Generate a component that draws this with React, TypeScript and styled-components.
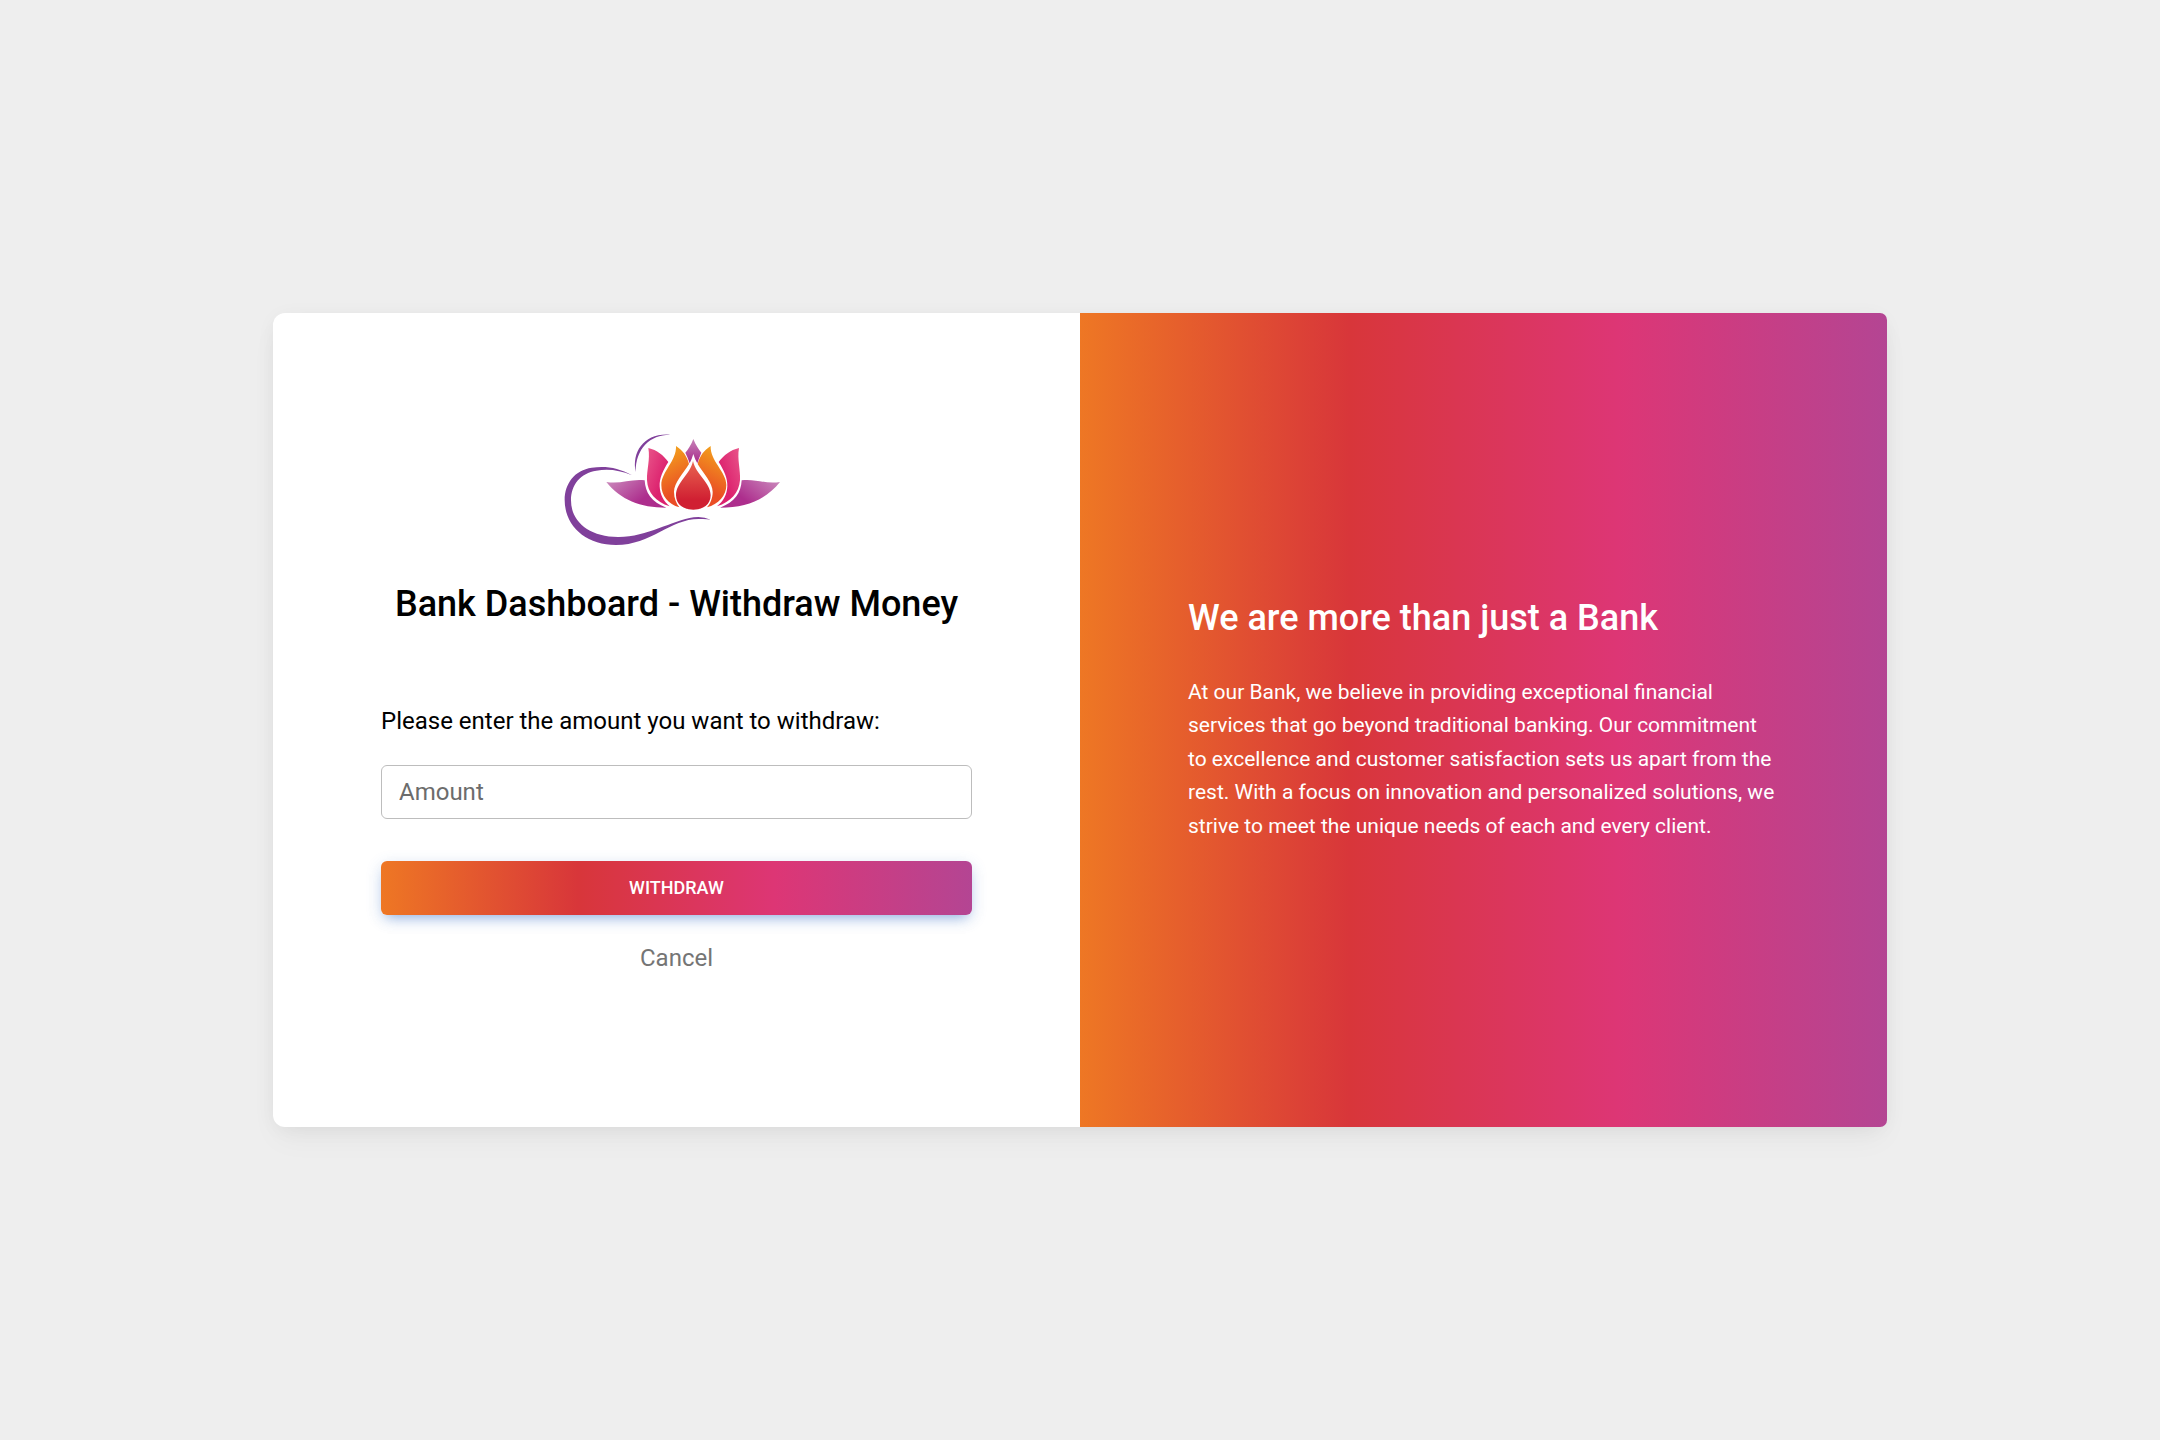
import React from "react";
import styled, { createGlobalStyle } from "styled-components";

const brandGradient = "linear-gradient(to right, #ee7724, #d8363a, #dd3675, #b44593)";

const GlobalStyle = createGlobalStyle`
  *, *::before, *::after { box-sizing: border-box; }
  body {
    margin: 0;
    background: #eee;
    color: #000;
    font-family: Roboto, "Liberation Sans", sans-serif;
    font-size: 24px;
    line-height: 1.6;
  }
`;

const Page = styled.main`
  min-height: 100vh;
  display: flex;
  align-items: center;
  justify-content: center;
`;

const Card = styled.section`
  width: 1614px;
  height: 814px;
  display: grid;
  grid-template-columns: 1fr 1fr;
  background: #fff;
  border-radius: 12px;
  box-shadow: 0 3px 22.5px -4.5px rgba(0, 0, 0, 0.07), 0 15px 30px -3px rgba(0, 0, 0, 0.04);
`;

const FormPanel = styled.div`
  display: flex;
  flex-direction: column;
  padding: 107px 108px 0;
`;

const Brand = styled.div`
  display: flex;
  flex-direction: column;
  align-items: center;
  gap: 22px;
  margin-bottom: 76px;
`;

const Logo = styled.svg`
  display: block;
  width: 254px;
  height: 140px;
`;

const Title = styled.h4`
  margin: 0;
  padding-top: 1px;
  font-size: 36px;
  font-weight: 500;
  line-height: 1.2;
`;

const Form = styled.form`
  display: flex;
  flex-direction: column;
`;

const Label = styled.label`
  margin-bottom: 24px;
`;

const AmountInput = styled.input`
  height: 54px;
  margin-bottom: 42px;
  padding: 0 17px;
  border: 1px solid #bdbdbd;
  border-radius: 6px;
  outline: 0;
  background: #fff;
  color: #4f4f4f;
  font: inherit;
  line-height: 1.6;
  &::placeholder { color: #6c6c6c; opacity: 1; }
`;

const SubmitButton = styled.button`
  height: 54px;
  margin-bottom: 24px;
  padding: 0;
  border: 0;
  border-radius: 6px;
  background: ${brandGradient};
  box-shadow: 0 7px 12px -6px rgba(59, 113, 202, 0.5), 0 4px 16px 0 rgba(59, 113, 202, 0.2);
  color: #fff;
  font: 500 18px/1.5 Roboto, "Liberation Sans", sans-serif;
  text-transform: uppercase;
`;

const CancelLink = styled.a`
  align-self: center;
  color: #757575;
  text-decoration: none;
`;

const AboutPanel = styled.div`
  display: flex;
  flex-direction: column;
  justify-content: center;
  gap: 35px;
  padding: 0 108px;
  border-radius: 0 7px 7px 0;
  background: ${brandGradient};
  color: #fff;
`;

const AboutText = styled.p`
  margin: 0;
  font-size: 21px;
`;

function LotusLogo() {
  return (
    <Logo viewBox="0 0 762 420" role="img" aria-label="Lotus">
      <defs>
        <linearGradient id="leafLeft" x1="0" y1="0" x2="1" y2="0.6">
          <stop offset="0" stopColor="#cb8bbd" />
          <stop offset="0.75" stopColor="#ad2e8d" />
        </linearGradient>
        <linearGradient id="leafRight" x1="1" y1="0" x2="0" y2="0.6">
          <stop offset="0" stopColor="#cb8bbd" />
          <stop offset="0.75" stopColor="#ad2e8d" />
        </linearGradient>
        <linearGradient id="pinkLeft" x1="0" y1="0" x2="0.65" y2="0.6">
          <stop offset="0" stopColor="#e9568a" />
          <stop offset="1" stopColor="#dc216e" />
        </linearGradient>
        <linearGradient id="pinkRight" x1="1" y1="0" x2="0.35" y2="0.6">
          <stop offset="0" stopColor="#e9568a" />
          <stop offset="1" stopColor="#dc216e" />
        </linearGradient>
        <linearGradient id="orangeLeft" x1="0.4" y1="0" x2="0.65" y2="1">
          <stop offset="0" stopColor="#f3a31c" />
          <stop offset="0.75" stopColor="#ea4d25" />
        </linearGradient>
        <linearGradient id="orangeRight" x1="0.6" y1="0" x2="0.35" y2="1">
          <stop offset="0" stopColor="#f3a31c" />
          <stop offset="0.75" stopColor="#ea4d25" />
        </linearGradient>
        <linearGradient id="tip" x1="0" y1="0" x2="0" y2="1">
          <stop offset="0" stopColor="#c783b8" />
          <stop offset="1" stopColor="#a7298a" />
        </linearGradient>
        <linearGradient id="core" x1="0" y1="0" x2="0" y2="1">
          <stop offset="0" stopColor="#e96550" />
          <stop offset="0.8" stopColor="#d01f32" />
        </linearGradient>
      </defs>
      <path fill="#80409b" d="M257 156C245 94 283 38 361 44C302 43 257 84 257 156Z" />
      <path
        fill="#80409b"
        d="M246 166C205 143 168 137 125 143C75 150 44 190 44 240C44 318 107 375 198 375C306 375 362 294 451 297Q467 296 482 299Q458 288 431 292C365 302 290 352 204 351C118 350 63 306 63 241C63 194 92 159 139 152C178 146 208 151 246 166Z"
      />
      <path fill="url(#leafLeft)" d="M169 186C213 193 241 176 284 181C286 219 304 246 349 263C270 263 212 239 169 186Z" />
      <path fill="url(#leafRight)" d="M690 186C646 193 618 176 575 181C573 219 555 246 510 263C589 263 647 239 690 186Z" />
      <path fill="url(#pinkLeft)" d="M295 84C321 90 340 105 355 126C339 151 328 174 329 199C330 224 341 244 359 259C317 246 293 218 291 181C290 149 301 119 295 84Z" />
      <path fill="url(#pinkRight)" d="M567 84C541 90 522 105 506 126C522 151 533 174 532 199C531 224 520 244 501 259C543 246 567 218 570 181C572 149 561 119 567 84Z" />
      <path fill="url(#orangeLeft)" d="M378 78C398 91 411 108 417 132C400 160 372 188 372 216C372 235 379 250 388 262C355 253 334 227 334 195C334 155 380 123 378 78Z" />
      <path fill="url(#orangeRight)" d="M482 78C462 91 449 108 443 132C460 160 488 188 488 216C488 235 481 250 471 262C505 253 529 227 529 195C529 155 480 123 482 78Z" />
      <path fill="url(#tip)" d="M430 57C437 75 446 88 454 98Q447 114 442 130Q435 119 430 102Q425 119 419 130Q414 114 406 98C415 88 423 75 430 57Z" />
      <path fill="url(#core)" d="M429 123C438 165 482 187 482 226C482 254 459 269 430 269C401 269 378 254 378 226C378 187 420 165 429 123Z" />
    </Logo>
  );
}

export default function App() {
  return (
    <>
      <GlobalStyle />
      <Page>
        <Card>
          <FormPanel>
            <Brand>
              <LotusLogo />
              <Title>Bank Dashboard - Withdraw Money</Title>
            </Brand>
            <Form onSubmit={(event) => event.preventDefault()}>
              <Label htmlFor="amount">Please enter the amount you want to withdraw:</Label>
              <AmountInput id="amount" placeholder="Amount" />
              <SubmitButton type="submit">Withdraw</SubmitButton>
              <CancelLink href="#">Cancel</CancelLink>
            </Form>
          </FormPanel>
          <AboutPanel>
            <Title>We are more than just a Bank</Title>
            <AboutText>
              At our Bank, we believe in providing exceptional financial services that go beyond
              traditional banking. Our commitment to excellence and customer satisfaction sets us
              apart from the rest. With a focus on innovation and personalized solutions, we strive
              to meet the unique needs of each and every client.
            </AboutText>
          </AboutPanel>
        </Card>
      </Page>
    </>
  );
}
